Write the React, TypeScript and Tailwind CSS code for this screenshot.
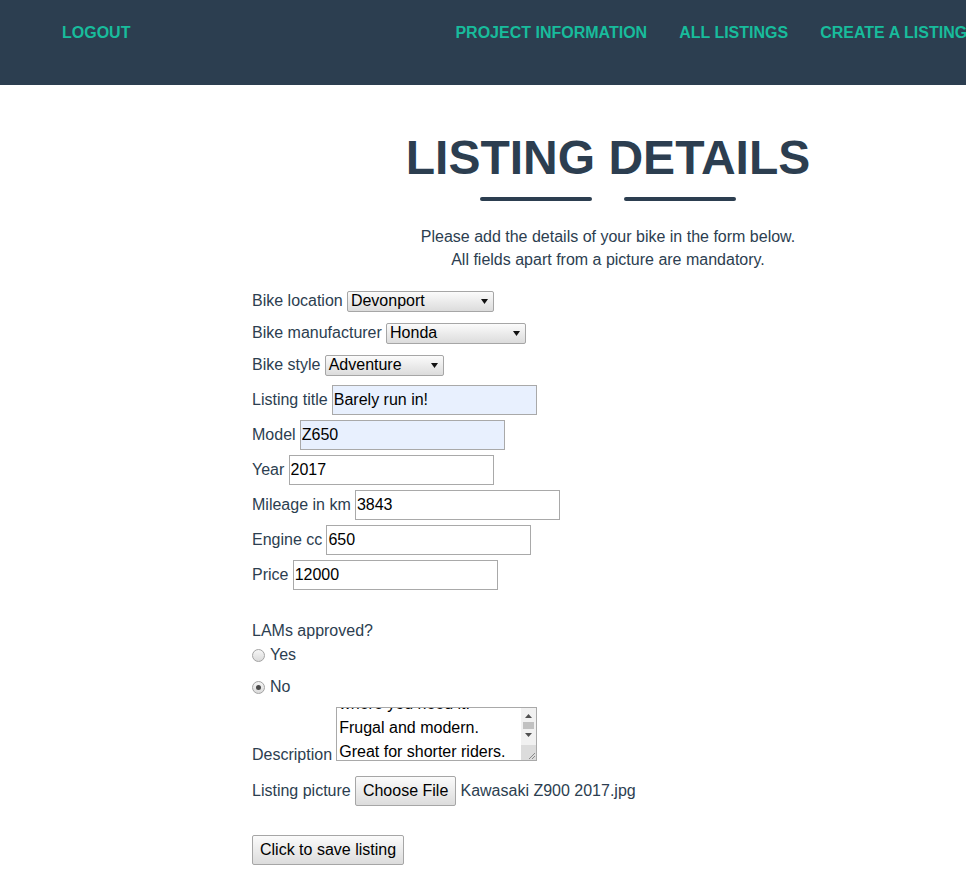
import {FC} from 'react'

const SelectBox: FC<{value: string, width: string}> = ({value, width}) => (
  <div className={`${width} h-[21px] flex items-center justify-between pl-[3px] pr-[5px] border border-[#a6a6a6] rounded-[2px] bg-gradient-to-b from-[#fbfbfb] to-[#dcdcdc] text-black`}>
    <span className="leading-none">{value}</span>
    <svg width="7" height="5" viewBox="0 0 7 5"><polygon points="0,0 7,0 3.5,5" fill="#111"/></svg>
  </div>
)

const TextField: FC<{value: string, filled?: boolean}> = ({value, filled}) => (
  <input
    readOnly
    value={value}
    className={`w-[205px] h-[30px] pl-[1px] border border-[#a9a9a9] text-black outline-none ${filled ? 'bg-[#e8f0fe]' : 'bg-white'}`}/>
)

const Radio: FC<{checked?: boolean}> = ({checked}) => (
  <span className="w-[13px] h-[13px] rounded-full border border-[#a3a3a3] bg-gradient-to-b from-[#f6f6f6] to-[#dadada] flex items-center justify-center">
    {checked && <span className="w-[5px] h-[5px] rounded-full bg-[#4a4a4a]"/>}
  </span>
)

const selectRows = [
  {label: 'Bike location', value: 'Devonport', width: 'w-[147px]'},
  {label: 'Bike manufacturer', value: 'Honda', width: 'w-[140px]'},
  {label: 'Bike style', value: 'Adventure', width: 'w-[119px]'},
]

const inputRows = [
  {label: 'Listing title', value: 'Barely run in!', filled: true},
  {label: 'Model', value: 'Z650', filled: true},
  {label: 'Year', value: '2017'},
  {label: 'Mileage in km', value: '3843'},
  {label: 'Engine cc', value: '650'},
  {label: 'Price', value: '12000'},
]

export default function App() {
  return (
    <div className="min-h-[883px] overflow-hidden bg-white font-['Liberation_Sans',Arial,sans-serif] text-[16px] leading-[1.42857] text-[#2c3e50]">
      <nav className="h-[85px] bg-[#2c3e50] flex items-start pt-[21px] pl-[62px] font-bold leading-6 text-[#18bc9c] whitespace-nowrap">
        <span className="shrink-0">LOGOUT</span>
        <div className="flex shrink-0 ml-[325px] gap-[32px]">
          <span>PROJECT INFORMATION</span>
          <span>ALL LISTINGS</span>
          <span>CREATE A LISTING</span>
        </div>
      </nav>

      <header className="pl-[252px] pr-[2px] text-center">
        <h1 className="mt-[47px] text-[48px] font-bold leading-[1.1]">LISTING DETAILS</h1>
        <div className="mt-[12px] flex justify-center gap-[32px]">
          <span className="w-[112px] h-[4px] rounded-full bg-[#2c3e50]"/>
          <span className="w-[112px] h-[4px] rounded-full bg-[#2c3e50]"/>
        </div>
        <p className="mt-[25px]">
          Please add the details of your bike in the form below.<br/>
          All fields apart from a picture are mandatory.
        </p>
      </header>

      <form className="pl-[252px] mt-[14px] flex flex-col items-start">
        {selectRows.map(row => (
          <div key={row.label} className="h-[32px] flex items-center gap-[4.2px]">
            <span>{row.label}</span>
            <SelectBox value={row.value} width={row.width}/>
          </div>
        ))}
        <div className="mt-[1px] flex flex-col">
          {inputRows.map(row => (
            <div key={row.label} className="h-[35px] flex items-center gap-[4.2px]">
              <span>{row.label}</span>
              <TextField value={row.value} filled={row.filled}/>
            </div>
          ))}
        </div>

        <p className="mt-[28px]">LAMs approved?</p>
        <label className="mt-[1px] h-[22px] flex items-center gap-[5px]">
          <Radio/>
          <span>Yes</span>
        </label>
        <label className="mt-[10px] h-[22px] flex items-center gap-[5px]">
          <Radio checked/>
          <span>No</span>
        </label>

        <div className="mt-[9px] flex items-end gap-[4.2px]">
          <span className="mb-[-6px]">Description</span>
          <div className="w-[201px] h-[54px] border border-[#a9a9a9] bg-white flex overflow-hidden">
            <div className="flex-1 overflow-hidden pl-[2px] leading-6 text-black">
              <div className="mt-[-16px]">
                <div>where you need it.</div>
                <div>Frugal and modern.</div>
                <div>Great for shorter riders.</div>
              </div>
            </div>
            <div className="w-[15px] bg-[#f1f1f1] flex flex-col items-center">
              <svg className="mt-[6px]" width="7" height="4" viewBox="0 0 7 4"><polygon points="0,4 7,4 3.5,0" fill="#505050"/></svg>
              <span className="mt-[4px] w-[11px] h-[7px] bg-[#c1c1c1]"/>
              <svg className="mt-[4px]" width="7" height="4" viewBox="0 0 7 4"><polygon points="0,0 7,0 3.5,4" fill="#505050"/></svg>
              <div className="mt-auto w-[15px] h-[15px] bg-[#dcdcdc] flex items-end justify-end">
                <svg width="8" height="8" viewBox="0 0 8 8">
                  <line x1="1" y1="7" x2="7" y2="1" stroke="#8a8a8a" strokeWidth="1"/>
                  <line x1="4" y1="7" x2="7" y2="4" stroke="#8a8a8a" strokeWidth="1"/>
                </svg>
              </div>
            </div>
          </div>
        </div>

        <div className="mt-[15px] flex items-center gap-[4.2px]">
          <span>Listing picture</span>
          <button type="button" className="h-[30px] px-[7px] border border-[#a6a6a6] rounded-[2px] bg-gradient-to-b from-[#fbfbfb] to-[#dcdcdc] text-black leading-none">
            Choose File
          </button>
          <span>Kawasaki Z900 2017.jpg</span>
        </div>

        <button type="button" className="mt-[29px] h-[30px] px-[7px] border border-[#a6a6a6] rounded-[2px] bg-gradient-to-b from-[#fbfbfb] to-[#dcdcdc] text-black leading-none">
          Click to save listing
        </button>
      </form>
    </div>
  )
}
